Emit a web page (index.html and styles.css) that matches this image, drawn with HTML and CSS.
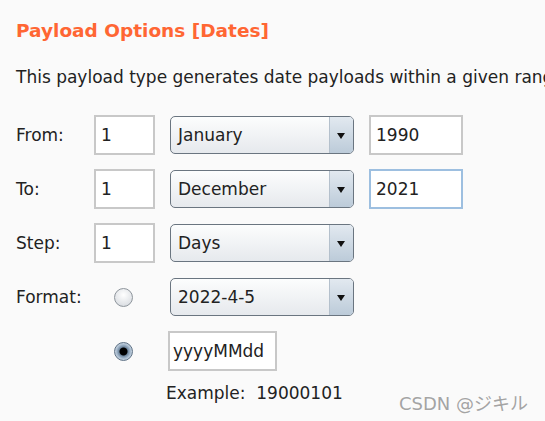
FILE: index.html
```html
<!DOCTYPE html>
<html lang="en">
<head>
    <meta charset="UTF-8">
    <title>Payload Options [Dates]</title>
    <link rel="stylesheet" href="styles.css">
</head>
<body>
    <div class="panel">
        <h2 class="title">Payload Options [Dates]</h2>
        <p class="desc">This payload type generates date payloads within a given range</p>

        <div class="form">
            <div class="row">
                <span class="label">From:</span>
                <span class="field day">1</span>
                <div class="combo"><span class="value">January</span><span class="arrow"></span></div>
                <span class="field year">1990</span>
            </div>
            <div class="row">
                <span class="label">To:</span>
                <span class="field day">1</span>
                <div class="combo"><span class="value">December</span><span class="arrow"></span></div>
                <span class="field year focus">2021</span>
            </div>
            <div class="row">
                <span class="label">Step:</span>
                <span class="field day">1</span>
                <div class="combo"><span class="value">Days</span><span class="arrow"></span></div>
            </div>
            <div class="row">
                <span class="label">Format:</span>
                <span class="radio-cell wide"><span class="radio"></span></span>
                <div class="combo"><span class="value">2022-4-5</span><span class="arrow"></span></div>
            </div>
            <div class="row">
                <span class="label"></span>
                <span class="radio-cell"><span class="radio checked"></span></span>
                <span class="field custom">yyyyMMdd</span>
            </div>
            <p class="example">Example:&nbsp; 19000101</p>
        </div>
    </div>

    <div class="watermark">CSDN @ジキル</div>
</body>
</html>
```

FILE: styles.css
```css
/* Layout */
body {
    margin: 0;
    background: #fafafa;
    font-family: 'DejaVu Sans', sans-serif;
    color: #222;
    overflow: hidden;
}

.panel {
    padding: 20px 0 0 16px;
    white-space: nowrap;
    overflow: hidden;
}

.title {
    margin: 0;
    font-size: 18.5px;
    line-height: 22px;
    font-weight: bold;
    color: #ff6633;
}

.desc {
    margin: 25px 0 0;
    font-size: 17px;
    line-height: 20px;
}

.form {
    margin-top: 28px;
}

.row {
    display: flex;
    align-items: center;
    height: 40px;
    margin-bottom: 14px;
    font-size: 17px;
}

.label {
    width: 78px;
    flex-shrink: 0;
}

/* Text fields */
.field {
    box-sizing: border-box;
    height: 40px;
    border: 2px solid #c8c8c8;
    background: #fff;
    line-height: 36px;
    padding-left: 5px;
}

.field.day {
    width: 61px;
    margin-right: 15px;
}

.field.year {
    width: 94px;
    margin-left: 15px;
}

.field.focus {
    border-color: #9dbfe0;
}

.field.custom {
    width: 109px;
    padding-left: 3px;
}

/* Combo box */
.combo {
    box-sizing: border-box;
    display: flex;
    width: 184px;
    height: 38px;
    border: 1px solid #6a7580;
    border-radius: 5px;
    overflow: hidden;
    background: linear-gradient(to bottom, #fcfdfd, #e6e9ed);
}

.combo .value {
    flex: 1;
    line-height: 36px;
    padding-left: 7px;
}

.combo .arrow {
    width: 23px;
    border-left: 1px solid #b4c0cc;
    background: linear-gradient(to bottom, #e2e9f0, #bccbd9);
    position: relative;
}

.combo .arrow::after {
    content: "";
    position: absolute;
    left: 7px;
    top: 16px;
    border-left: 4px solid transparent;
    border-right: 4px solid transparent;
    border-top: 6px solid #111;
}

/* Radio buttons */
.radio-cell {
    width: 74px;
    flex-shrink: 0;
    padding-left: 20px;
    box-sizing: border-box;
}

.radio-cell.wide {
    width: 76px;
}

.radio {
    display: block;
    box-sizing: border-box;
    width: 19px;
    height: 19px;
    border-radius: 50%;
    border: 1px solid #8e959c;
    background: radial-gradient(circle at 50% 35%, #ffffff, #dfe2e6 70%, #c9ced4);
}

.radio.checked {
    border-color: #5d7185;
    background: radial-gradient(circle, #000 0 3.5px, #6e869e 4.5px, #a9bccf 7px, #cfdae5 9px);
}

.example {
    margin: -2px 0 0 150px;
    font-size: 17px;
    line-height: 20px;
}

/* Watermark over the page */
.watermark {
    position: absolute;
    left: 399px;
    top: 389px;
    font-size: 18px;
    color: #a4a4a4;
    font-family: 'DejaVu Sans', 'Noto Sans CJK JP', sans-serif;
    text-shadow: 0 0 2px #fff;
}
```
